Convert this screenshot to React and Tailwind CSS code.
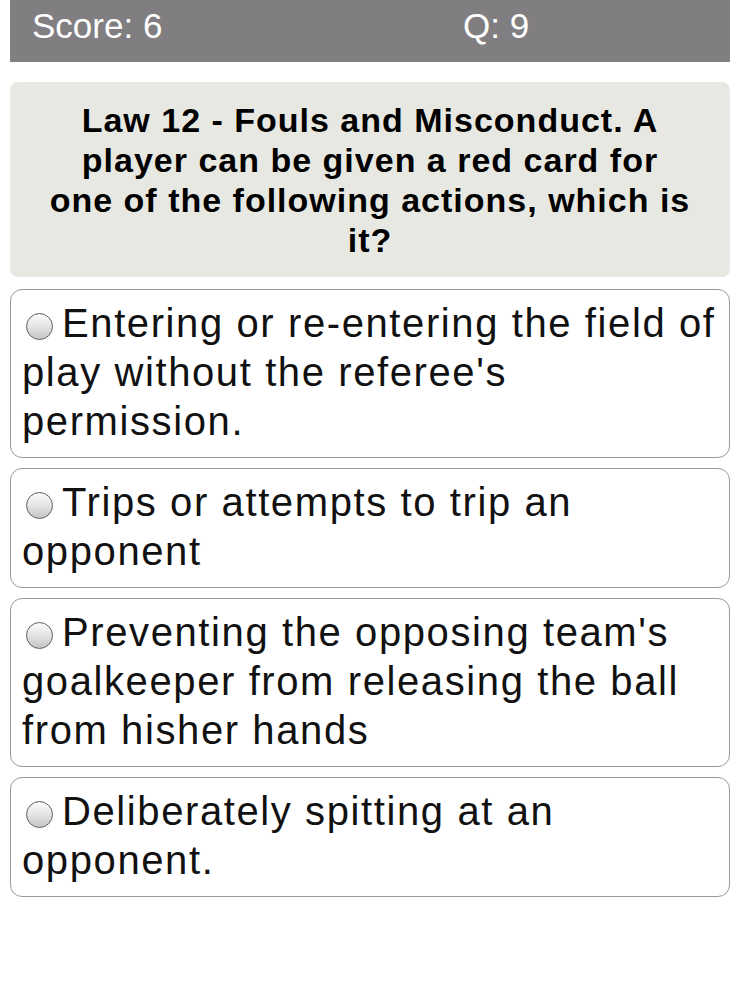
const options = [
  ["Entering or re-entering the field of", "play without the referee's", "permission."],
  ["Trips or attempts to trip an", "opponent"],
  ["Preventing the opposing team's", "goalkeeper from releasing the ball", "from hisher hands"],
  ["Deliberately spitting at an", "opponent."],
];

const question = [
  "Law 12 - Fouls and Misconduct. A",
  "player can be given a red card for",
  "one of the following actions, which is",
  "it?",
];

function Radio() {
  return (
    <span className="inline-block w-[27px] h-[27px] rounded-full border-[1.5px] border-[#5e5e5e] bg-gradient-to-b from-[#fbfbfb] via-[#e4e4e4] to-[#c4c4c4] align-[-3px] ml-[4px] mr-[9px]" />
  );
}

export default function App() {
  return (
    <div className="bg-white min-h-[1000px] w-[750px] font-['Liberation_Sans',Arial,sans-serif]">
      <div className="ml-[10px] w-[720px] h-[62px] bg-[#807e80] flex items-start pt-[6px] pl-[22px] text-white text-[35px] leading-[40px]">
        <span className="w-[431px]">Score: 6</span>
        <span>Q: 9</span>
      </div>

      <div className="ml-[10px] w-[720px] mt-[20px] bg-[#e8e8e3] rounded-[8px] px-2 pt-[18px] pb-[17px] text-center font-bold text-[34px] leading-[40px] tracking-[1px] text-black">
        {question.map((l, i) => (
          <div key={i} className="whitespace-nowrap">{l}</div>
        ))}
      </div>

      <div className="ml-[10px] w-[720px] mt-[12px] flex flex-col gap-[10px]">
        {options.map((lines, i) => (
          <div
            key={i}
            className="border border-[#9a9a9a] rounded-[12px] pl-[11px] pr-2 pt-[9px] pb-[11px] text-[40px] leading-[49px] tracking-[1.6px] text-[#111]"
          >
            {lines.map((l, j) => (
              <div key={j} className="whitespace-nowrap">
                {j === 0 && <Radio />}
                {l}
              </div>
            ))}
          </div>
        ))}
      </div>
    </div>
  );
}
